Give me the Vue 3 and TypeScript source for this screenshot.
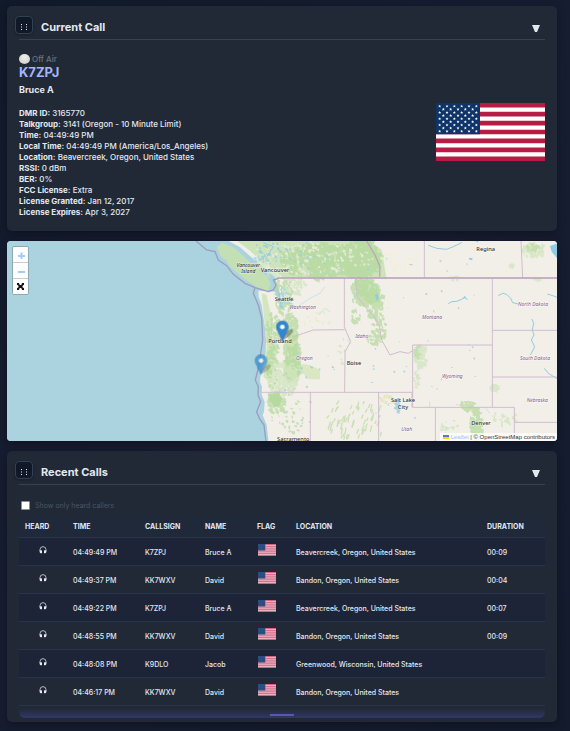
<script setup lang="ts">
import { ref } from 'vue'

interface Detail { label: string; value: string }
interface Call { time: string; callsign: string; name: string; location: string; duration: string }
interface Patch { cx: number; cy: number; rx: number; ry: number; n: number; size: number; color: string }
interface Blob { d: string; color: string }
interface Label { x: number; y: number; text: string }

const callOpen = ref(true)
const recentOpen = ref(true)
const heardOnly = ref(false)

const details: Detail[] = [
  { label: 'DMR ID', value: '3165770' },
  { label: 'Talkgroup', value: '3141 (Oregon - 10 Minute Limit)' },
  { label: 'Time', value: '04:49:49 PM' },
  { label: 'Local Time', value: '04:49:49 PM (America/Los_Angeles)' },
  { label: 'Location', value: 'Beavercreek, Oregon, United States' },
  { label: 'RSSI', value: '0 dBm' },
  { label: 'BER', value: '0%' },
  { label: 'FCC License', value: 'Extra' },
  { label: 'License Granted', value: 'Jan 12, 2017' },
  { label: 'License Expires', value: 'Apr 3, 2027' },
]

const calls: Call[] = [
  { time: '04:49:49 PM', callsign: 'K7ZPJ', name: 'Bruce A', location: 'Beavercreek, Oregon, United States', duration: '00:09' },
  { time: '04:49:37 PM', callsign: 'KK7WXV', name: 'David', location: 'Bandon, Oregon, United States', duration: '00:04' },
  { time: '04:49:22 PM', callsign: 'K7ZPJ', name: 'Bruce A', location: 'Beavercreek, Oregon, United States', duration: '00:07' },
  { time: '04:48:55 PM', callsign: 'KK7WXV', name: 'David', location: 'Bandon, Oregon, United States', duration: '00:09' },
  { time: '04:48:08 PM', callsign: 'K9DLO', name: 'Jacob', location: 'Greenwood, Wisconsin, United States', duration: '' },
  { time: '04:46:17 PM', callsign: 'KK7WXV', name: 'David', location: 'Bandon, Oregon, United States', duration: '' },
]

// Nine staggered rows of stars: six, five, six, ...
const stars: { x: number; y: number }[] = []
for (let r = 0; r < 9; r++) {
  const odd = r % 2 === 1
  for (let c = 0; c < (odd ? 5 : 6); c++) {
    stars.push({ x: 11 + c * 22 + (odd ? 11 : 0), y: 9.5 + r * 9.4 })
  }
}

// Map drawing units: three per pixel.
const GREEN = '#b4d99c'
const PALE = '#cfe4ba'
const WATER = '#8fcbe2'

const patches: Patch[] = [
  { cx: 850, cy: 775, rx: 90, ry: 48, n: 170, size: 12, color: PALE },
  { cx: 985, cy: 775, rx: 150, ry: 52, n: 360, size: 12, color: GREEN },
  { cx: 1080, cy: 765, rx: 60, ry: 58, n: 130, size: 12, color: GREEN },
  { cx: 930, cy: 770, rx: 190, ry: 50, n: 120, size: 6, color: '#eeeee2' },
  { cx: 850, cy: 880, rx: 26, ry: 60, n: 70, size: 8, color: GREEN },
  { cx: 885, cy: 850, rx: 30, ry: 30, n: 40, size: 8, color: PALE },
  { cx: 820, cy: 980, rx: 26, ry: 50, n: 55, size: 7, color: GREEN },
  { cx: 868, cy: 965, rx: 22, ry: 30, n: 40, size: 8, color: GREEN },
  { cx: 815, cy: 1065, rx: 18, ry: 100, n: 90, size: 8, color: GREEN },
  { cx: 872, cy: 1060, rx: 24, ry: 95, n: 150, size: 9, color: GREEN },
  { cx: 845, cy: 1130, rx: 50, ry: 50, n: 130, size: 9, color: PALE },
  { cx: 825, cy: 1205, rx: 24, ry: 32, n: 60, size: 9, color: GREEN },
  { cx: 860, cy: 1235, rx: 50, ry: 80, n: 45, size: 6, color: GREEN },
  { cx: 1020, cy: 1050, rx: 50, ry: 40, n: 12, size: 6, color: PALE },
  { cx: 1090, cy: 870, rx: 45, ry: 40, n: 130, size: 9, color: GREEN },
  { cx: 1120, cy: 905, rx: 26, ry: 50, n: 75, size: 9, color: GREEN },
  { cx: 1064, cy: 945, rx: 14, ry: 22, n: 25, size: 7, color: GREEN },
  { cx: 1133, cy: 980, rx: 22, ry: 45, n: 45, size: 7, color: GREEN },
  { cx: 1120, cy: 1010, rx: 20, ry: 20, n: 20, size: 7, color: GREEN },
  { cx: 1258, cy: 1065, rx: 20, ry: 34, n: 70, size: 8, color: PALE },
  { cx: 1250, cy: 1052, rx: 10, ry: 20, n: 22, size: 7, color: GREEN },
  { cx: 1247, cy: 1135, rx: 8, ry: 30, n: 18, size: 6, color: PALE },
  { cx: 1425, cy: 1270, rx: 16, ry: 55, n: 90, size: 9, color: GREEN },
  { cx: 1400, cy: 1212, rx: 24, ry: 14, n: 34, size: 7, color: GREEN },
  { cx: 1480, cy: 1160, rx: 12, ry: 10, n: 22, size: 7, color: PALE },
  { cx: 1510, cy: 1250, rx: 36, ry: 24, n: 22, size: 7, color: PALE },
  { cx: 1345, cy: 1275, rx: 30, ry: 20, n: 16, size: 6, color: PALE },
  { cx: 1600, cy: 745, rx: 36, ry: 22, n: 60, size: 8, color: PALE },
  { cx: 1595, cy: 738, rx: 24, ry: 10, n: 26, size: 7, color: GREEN },
  { cx: 1532, cy: 793, rx: 9, ry: 5, n: 16, size: 6, color: PALE },
  { cx: 1365, cy: 830, rx: 22, ry: 5, n: 16, size: 6, color: PALE },
  { cx: 1605, cy: 833, rx: 13, ry: 4, n: 12, size: 6, color: PALE },
  { cx: 1160, cy: 1195, rx: 24, ry: 14, n: 22, size: 7, color: '#dfe4b2' },
  { cx: 1190, cy: 780, rx: 60, ry: 30, n: 30, size: 7, color: '#f1f0d3' },
  { cx: 950, cy: 960, rx: 40, ry: 30, n: 16, size: 6, color: '#e7ecc5' },
  { cx: 1190, cy: 1215, rx: 8, ry: 18, n: 28, size: 6, color: WATER },
  { cx: 800, cy: 755, rx: 46, ry: 40, n: 34, size: 6, color: WATER },
  { cx: 910, cy: 765, rx: 70, ry: 42, n: 22, size: 5, color: WATER },
  { cx: 850, cy: 885, rx: 18, ry: 34, n: 26, size: 6, color: WATER },
  { cx: 1300, cy: 1150, rx: 270, ry: 150, n: 26, size: 4, color: WATER },
  { cx: 1250, cy: 850, rx: 280, ry: 110, n: 16, size: 4, color: WATER },
  { cx: 925, cy: 1150, rx: 90, ry: 120, n: 18, size: 5, color: WATER },
]

// Fixed-seed scatter, so that the terrain is the same on each load.
let seed = 20170112
function rand(): number {
  seed = (seed * 1103515245 + 12345) % 2147483648
  return seed / 2147483648
}
function scatter(p: Patch): string {
  let d = ''
  for (let i = 0; i < p.n; i++) {
    const a = rand() * Math.PI * 2
    const r = Math.sqrt(rand())
    const x = Math.round(p.cx + Math.cos(a) * r * p.rx)
    const y = Math.round(p.cy + Math.sin(a) * r * p.ry)
    const s = p.size * (0.5 + rand())
    const h = p.size * (0.5 + rand())
    d += `M${x} ${y}l${s.toFixed(1)} ${(h * 0.4).toFixed(1)}l${(-s * 0.2).toFixed(1)} ${h.toFixed(1)}l${(-s).toFixed(1)} ${(-h * 0.5).toFixed(1)}z`
  }
  return d
}
const terrain: Blob[] = patches.map((p) => ({ d: scatter(p), color: p.color }))

// Narrow ranges of the Great Basin.
let ridges = ''
for (let i = 0; i < 58; i++) {
  const x = 985 + rand() * 160
  const y = 1200 + rand() * 115
  ridges += `M${x.toFixed(0)} ${y.toFixed(0)}l${(-3 - rand() * 5).toFixed(0)} ${(8 + rand() * 16).toFixed(0)}`
}

const cities: Label[] = [
  { x: 825, y: 817, text: 'Vancouver' },
  { x: 852, y: 902, text: 'Seattle' },
  { x: 840, y: 1030, text: 'Portland' },
  { x: 1062, y: 1096, text: 'Boise' },
  { x: 1457, y: 754, text: 'Regina' },
  { x: 1209, y: 1207, text: 'Salt Lake' },
  { x: 1209, y: 1227, text: 'City' },
  { x: 1443, y: 1274, text: 'Denver' },
  { x: 880, y: 1324, text: 'Sacramento' },
]
const states: Label[] = [
  { x: 908, y: 928, text: 'Washington' },
  { x: 1085, y: 1013, text: 'Idaho' },
  { x: 913, y: 1081, text: 'Oregon' },
  { x: 1296, y: 956, text: 'Montana' },
  { x: 1599, y: 918, text: 'North Dakota' },
  { x: 1605, y: 1079, text: 'South Dakota' },
  { x: 1357, y: 1135, text: 'Wyoming' },
  { x: 1612, y: 1205, text: 'Nebraska' },
  { x: 1220, y: 1293, text: 'Utah' },
]
</script>

<template>
  <main class="page">
    <svg class="defs" aria-hidden="true">
      <symbol id="flag-us" viewBox="0 0 327 174" preserveAspectRatio="none">
        <rect class="flag-field" width="327" height="174" />
        <path class="flag-stripes" d="M0 6.7H327M0 33.5H327M0 60.2H327M0 87H327M0 113.8H327M0 140.5H327M0 167.3H327" />
        <rect class="flag-canton" width="132" height="93.7" />
        <path
          v-for="(s, i) in stars"
          :key="i"
          :transform="`translate(${s.x} ${s.y})`"
          d="M0-4.6L1.3-1.5L4.6-1.4L2 .8L2.9 4L0 2.1L-2.9 4L-2 .8L-4.6-1.4L-1.3-1.5z"
          class="flag-star"
        />
      </symbol>
      <symbol id="pin" viewBox="0 0 25 41">
        <path d="M12.5.5C5.8.5.5 5.8.5 12.5c0 3 1.3 5.7 2.8 8.5L12.5 40.5l9.2-19.5c1.5-2.8 2.8-5.5 2.8-8.5C24.5 5.8 19.2.5 12.5.5z" fill="#3086cf" stroke="#2a6da9" />
        <circle cx="12.5" cy="12.5" r="4.6" fill="#fff" />
      </symbol>
    </svg>

    <section class="panel">
      <header class="panel-head">
        <button class="grip" type="button" aria-label="Move panel">
          <svg viewBox="0 0 8 8"><path d="M1.5 1v1M1.5 3.5v1M1.5 6v1M6.5 1v1M6.5 3.5v1M6.5 6v1" stroke="currentColor" stroke-width="1" /></svg>
        </button>
        <h2>Current Call</h2>
        <button class="fold" type="button" aria-label="Toggle current call" @click="callOpen = !callOpen">
          <svg viewBox="0 0 8 7"><path d="M0 0H8L5 7H3z" fill="currentColor" /></svg>
        </button>
      </header>
      <div v-if="callOpen" class="call">
        <div>
          <p class="status"><span class="lamp"></span>Off Air</p>
          <p class="callsign">K7ZPJ</p>
          <p class="operator">Bruce A</p>
          <ul class="details">
            <li v-for="d in details" :key="d.label"><strong>{{ d.label }}:</strong> {{ d.value }}</li>
          </ul>
        </div>
        <svg class="flag-big" role="img" aria-label="United States"><use href="#flag-us" /></svg>
      </div>
    </section>

    <section class="map" aria-label="Map">
      <svg class="map-art" viewBox="21 723 1650 600" preserveAspectRatio="xMidYMid slice">
        <rect x="-2000" y="0" width="6000" height="2000" fill="#aad3df" />
        <path
          d="M672 715L720 742L750 768L785 798L800 812L825 830L830 850L838 872L842 895L834 912L830 890L825 875L800 872L775 872L776 890L785 915L790 950L796 990L798 1020L797 1060L792 1090L783 1115L780 1145L786 1160L785 1185L794 1205L792 1235L788 1245L800 1275L806 1330H4000V700z"
          fill="#f2efe9"
        />
        <path d="M650 740L668 728L700 742L720 758L748 785L775 808L800 828L812 850L808 868L795 872L765 858L735 838L708 815L690 800L680 782L662 768z" fill="#c5dfb4" />
        <path d="M712 723H1110L1145 750L1160 838L1100 835H850L825 810L780 780L750 752z" fill="#cde3ba" />
        <path d="M785 880L800 885L815 960L818 1020L838 1035L818 1110L812 1150L790 1130L800 1040L790 930z" fill="#d3e6c0" />
        <path d="M865 1010L895 1000L890 1080L908 1098L925 1112L900 1125L865 1150L850 1120z" fill="#cfe3bb" />
        <path d="M905 1092L930 1095L960 1110L960 1138L925 1138L908 1118z" fill="#dbe6c2" />
        <path d="M803 1180H838L846 1195L840 1216L825 1220L806 1200z" fill="#bedbaa" />
        <path d="M1065 835H1110L1135 870L1140 905L1110 912L1070 880z" fill="#cbe2b8" />
        <g opacity=".72"><path v-for="(t, i) in terrain" :key="i" :d="t.d" :fill="t.color" /></g>
        <path :d="ridges" class="ridges" />
        <path d="M1665 733L1650 738L1655 755L1671 775V730zM1125 885L1132 880L1136 895L1130 902z" fill="#8ecbe6" />
        <path d="M1408 773L1418 775L1416 781L1406 778z" fill="#8fcce4" />
        <path
          class="rivers"
          d="M1345 911L1355 905L1370 904L1385 898L1395 890L1402 900M1395 890L1391 897M1495 887L1508 880L1520 883L1532 895L1538 908L1555 912M1642 882L1658 887L1671 892M1596 957L1601 970L1597 990L1602 1005L1594 1020L1604 1040L1594 1060L1590 1065M1633 1105L1645 1120L1671 1136M1285 736L1310 745L1340 748L1360 740L1385 728M1422 720L1435 726M840 880L838 900L846 925L838 915M800 770L820 740L790 728M720 790L745 800"
        />
        <path class="rivers faint" d="M900 915L930 895L960 880L975 860M955 945L975 925L990 935M1289 1205V1225M1455 1222L1470 1240" />
        <path
          class="border"
          d="M832 834H1671M1033 835V980L1040 998L1052 1025L1035 1055L1034 1177M880 1010L910 1000L940 990L1034 989M785 1177H1236M931 1177V1323M1136 1177V1323M1236 1177V1222M1066 833L1072 890L1095 920L1120 945L1138 980L1145 1020L1170 1065L1200 1055L1225 1060L1238 1052M1238 1035H1477M1238 1035V1222H1543M1477 837V1222M1477 991H1671M1477 1131H1671M1306 1222V1323M1543 1222V1323M1543 1267H1671M1273 723V835M1563 723L1568 835"
        />
        <path class="border strong" d="M832 834H1671M1100 723L1110 740L1125 765L1140 800L1139 830" />
        <path
          class="border coast"
          d="M588 723L620 750L645 755L655 780L680 797L700 823L735 850L765 863L805 875L820 870L828 855L820 840L835 835M765 863L760 880L775 915L785 955L788 1020L782 1060L776 1100L766 1140L775 1160L774 1185L782 1205L770 1235L778 1255L792 1275L798 1325"
        />
        <g class="island"><text x="745" y="800">Vancouver</text><text x="745" y="818">Island</text></g>
        <g class="city"><text v-for="c in cities" :key="c.text" :x="c.x" :y="c.y">{{ c.text }}</text></g>
        <g class="state"><text v-for="s in states" :key="s.text" :x="s.x" :y="s.y">{{ s.text }}</text></g>
        <g fill="#000" opacity=".3">
          <ellipse cx="862" cy="1003" rx="22" ry="8" transform="rotate(-40 862 1003)" />
          <ellipse cx="798" cy="1106" rx="20" ry="7" transform="rotate(-40 798 1106)" opacity=".6" />
        </g>
        <use href="#pin" x="764" y="1063" width="38" height="62" opacity=".7" />
        <use href="#pin" x="828" y="962" width="38" height="62" />
      </svg>
      <div class="zoom">
        <button type="button" aria-label="Zoom in"><svg viewBox="0 0 15 15"><path d="M5 9H12M8.500 5.500V12" stroke="#a3cdf8" stroke-width="2" /></svg></button>
        <button type="button" aria-label="Zoom out"><svg viewBox="0 0 15 15"><path d="M5 9H12" stroke="#a3cdf8" stroke-width="2" /></svg></button>
        <button type="button" aria-label="Full screen">
          <svg viewBox="0 0 15 15"><path d="M4 4h2.500L5.800 4.800L7 6h1L9.200 4.800L8.500 4H11V6.500L10.200 5.800L9.500 7V8L10.200 9.200L11 8.500V11H8.500L9.200 10.200L8 9H7L5.800 10.200L6.500 11H4V8.500L4.800 9.200L5.500 8V7L4.800 5.800L4 6.500z" fill="#111" /></svg>
        </button>
      </div>
      <p class="credit">
        <a href="#leaflet"><svg viewBox="0 0 6 4"><path d="M0 0H6V2H0z" fill="#4c7be1" /><path d="M0 2H6V4H0z" fill="#ffd500" /></svg>Leaflet</a>
        | © OpenStreetMap contributors
      </p>
    </section>

    <section class="panel">
      <header class="panel-head">
        <button class="grip" type="button" aria-label="Move panel">
          <svg viewBox="0 0 8 8"><path d="M1.5 1v1M1.5 3.5v1M1.5 6v1M6.5 1v1M6.5 3.5v1M6.5 6v1" stroke="currentColor" stroke-width="1" /></svg>
        </button>
        <h2>Recent Calls</h2>
        <button class="fold" type="button" aria-label="Toggle recent calls" @click="recentOpen = !recentOpen">
          <svg viewBox="0 0 8 7"><path d="M0 0H8L5 7H3z" fill="currentColor" /></svg>
        </button>
      </header>
      <div v-if="recentOpen" class="recent">
        <label class="filter"><input v-model="heardOnly" type="checkbox" />Show only heard callers</label>
        <table>
          <colgroup>
            <col class="c-heard" /><col class="c-time" /><col class="c-sign" /><col class="c-name" />
            <col class="c-flag" /><col /><col class="c-dur" />
          </colgroup>
          <thead>
            <tr><th>HEARD</th><th>TIME</th><th>CALLSIGN</th><th>NAME</th><th>FLAG</th><th>LOCATION</th><th>DURATION</th></tr>
          </thead>
          <tbody>
            <tr v-for="c in calls" :key="c.time">
              <td class="heard">
                <svg viewBox="0 0 24 24" role="img" aria-label="Heard">
                  <path d="M3 16V11a9 9 0 0 1 18 0V16" fill="none" stroke="#cdd3dc" stroke-width="2.5" />
                  <path d="M2 13.5Q2 12.5 3 12.5H7Q9 12.5 9 14.5V20Q9 22 7 22H6Q2 22 2 17zM22 13.5Q22 12.5 21 12.5H17Q15 12.5 15 14.5V20Q15 22 17 22H18Q22 22 22 17z" fill="#e5e8ec" />
                </svg>
              </td>
              <td>{{ c.time }}</td>
              <td>{{ c.callsign }}</td>
              <td>{{ c.name }}</td>
              <td class="flag"><svg role="img" aria-label="United States"><use href="#flag-us" /></svg></td>
              <td>{{ c.location }}</td>
              <td>{{ c.duration }}</td>
            </tr>
          </tbody>
        </table>
        <div class="resize"><span></span></div>
      </div>
    </section>
  </main>
</template>

<style>
body {
  margin: 0;
  background: #141b2d;
}
</style>

<style scoped>
* {
  box-sizing: border-box;
}
.page {
  display: flex;
  flex-direction: column;
  gap: 10px;
  padding: 6px 13px 9px 7px;
  background: linear-gradient(135deg, #111a2b, #171d31 50%, #131b2d);
  color: #e2e8f0;
  font-family: Inter, sans-serif;
  font-size: 8px;
  line-height: 11px;
}
.defs {
  position: absolute;
  width: 0;
  height: 0;
}
.flag-field {
  fill: var(--flag-white, #fff);
}
.flag-stripes {
  stroke: var(--flag-red, #b71c45);
  stroke-width: 14;
}
.flag-canton {
  fill: var(--flag-blue, #0e3468);
}
.flag-star {
  fill: var(--flag-star, #fff);
}
h2, p, ul {
  margin: 0;
  padding: 0;
}
button {
  padding: 0;
  border: 0;
  background: none;
  color: inherit;
  cursor: pointer;
}
.panel {
  padding: 10px 12px 4px;
  border-radius: 5px;
  background: #212936;
  box-shadow: 0 3px 8px rgba(0, 0, 0, 0.3);
}
.panel-head {
  display: flex;
  align-items: flex-start;
  gap: 8px;
  height: 24px;
  border-bottom: 1px solid #364151;
}
.grip {
  display: grid;
  place-items: center;
  width: 18px;
  height: 18px;
  margin-left: -4px;
  border: 1px solid #334155;
  border-radius: 4px;
  background: #111827;
  box-shadow: 0 1px 3px rgba(0, 0, 0, 0.3);
}
.grip svg {
  width: 8px;
  height: 8px;
  margin-top: 4px;
}
h2 {
  flex: 1;
  font-size: 11px;
  line-height: 22px;
  font-weight: 700;
}
.fold {
  padding: 9px 5px 0 0;
}
.fold svg {
  display: block;
  width: 8px;
  height: 7px;
}
.call {
  display: flex;
  align-items: center;
  justify-content: space-between;
  padding: 13px 0 9px;
}
.status {
  display: flex;
  align-items: center;
  gap: 2px;
  height: 12px;
  color: #6b7280;
  font-weight: 500;
}
.lamp {
  width: 11px;
  height: 10px;
  border-radius: 50%;
  background: radial-gradient(circle at 50% 30%, #eeeeea, #d5d5d0 70%, #aaa);
}
.callsign {
  color: #a5b4fc;
  font-size: 13px;
  line-height: 15px;
  font-weight: 700;
}
.operator {
  padding: 4px 0 12px;
  font-size: 9px;
  line-height: 12px;
  font-weight: 700;
}
.details {
  list-style: none;
  font-weight: 500;
}
.details strong {
  font-weight: 700;
}
.flag-big {
  width: 109px;
  height: 58px;
  margin-bottom: 8px;
}
.map {
  position: relative;
  height: 200px;
  overflow: hidden;
  border-radius: 4px;
  background: #aad3df;
  box-shadow: 0 3px 8px rgba(0, 0, 0, 0.3);
}
.map-art {
  display: block;
  width: 100%;
  height: 100%;
  font-family: "Noto Sans", sans-serif;
  text-anchor: middle;
}
.border {
  fill: none;
  stroke: #d0bccd;
  stroke-width: 3;
}
.strong {
  stroke: #bba6ba;
  stroke-width: 4;
}
.coast {
  stroke: #9d9dc0;
  stroke-width: 4;
}
.rivers {
  fill: none;
  stroke: #8fcbdf;
  stroke-width: 3;
}
.faint {
  stroke: #b5dbe6;
  stroke-width: 2;
}
.ridges {
  fill: none;
  stroke: #cbe0b4;
  stroke-width: 4;
}
.city text, .island text, .state text {
  paint-order: stroke;
  stroke: rgba(255, 255, 255, 0.6);
  stroke-width: 3px;
}
.city {
  fill: #333;
  font-size: 17px;
  font-weight: 500;
}
.island {
  fill: #333;
  font-size: 15px;
  font-style: italic;
  font-weight: 500;
}
.state {
  fill: #85598a;
  font-size: 15px;
  font-style: italic;
}
.zoom {
  position: absolute;
  top: 5px;
  left: 5px;
  display: flex;
  flex-direction: column;
  gap: 1px;
  overflow: hidden;
  border: 1px solid #8ba9b2;
  border-radius: 2px;
  background: #ccc;
}
.zoom button {
  width: 15px;
  height: 15px;
  background: #fff;
}
.zoom svg {
  display: block;
}
.credit {
  position: absolute;
  right: 0;
  bottom: 0;
  padding: 0 2px 0 3px;
  background: rgba(255, 255, 255, 0.8);
  color: #333;
  font-family: "Liberation Sans", sans-serif;
  font-size: 6px;
  line-height: 8px;
  white-space: nowrap;
}
.credit a {
  color: #93c5fd;
  text-decoration: none;
}
.credit svg {
  width: 6px;
  height: 4px;
  margin-right: 2px;
}
.recent {
  padding-top: 9px;
}
.filter {
  display: flex;
  align-items: center;
  gap: 5px;
  height: 22px;
  padding-left: 2px;
  color: #4b5563;
  font-size: 7px;
}
.filter input {
  appearance: none;
  width: 9px;
  height: 9px;
  margin: 0;
  border: 1px solid #8b8f96;
  border-radius: 1px;
  background: #fff;
}
.filter input:checked {
  background: #818cf8;
}
table {
  width: 100%;
  table-layout: fixed;
  border-collapse: separate;
  border-spacing: 0;
}
.c-heard {
  width: 48px;
}
.c-time {
  width: 72px;
}
.c-sign {
  width: 60px;
}
.c-name {
  width: 52px;
}
.c-flag {
  width: 39px;
}
.c-dur {
  width: 64px;
}
th, td {
  padding: 0 6px;
  overflow: hidden;
  text-align: left;
  vertical-align: middle;
  white-space: nowrap;
  font-size: 7px;
  border-bottom: 1px solid #283449;
}
th {
  height: 22px;
  background: #1f293a;
  font-weight: 700;
}
td {
  height: 28px;
  padding-top: 2px;
  font-weight: 500;
}
tbody tr:nth-child(odd) {
  background: #1d2437;
}
.heard, .flag {
  padding-top: 0;
  padding-bottom: 4px;
}
.heard svg {
  display: block;
  width: 8px;
  height: 8px;
  margin: 0 auto;
}
.flag svg {
  --flag-white: #f0c3cf;
  --flag-red: #cb5374;
  --flag-blue: #234a7c;
  --flag-star: #5c7ba3;
  display: block;
  width: 18px;
  height: 12px;
  margin-left: 1px;
}
.resize {
  display: flex;
  align-items: flex-end;
  justify-content: center;
  height: 12px;
  padding-bottom: 2px;
  border-radius: 0 0 6px 6px;
  background: linear-gradient(rgba(99, 102, 241, 0) 20%, rgba(79, 82, 190, 0.35));
}
.resize span {
  width: 24px;
  height: 2px;
  background: #565aa8;
}
</style>
